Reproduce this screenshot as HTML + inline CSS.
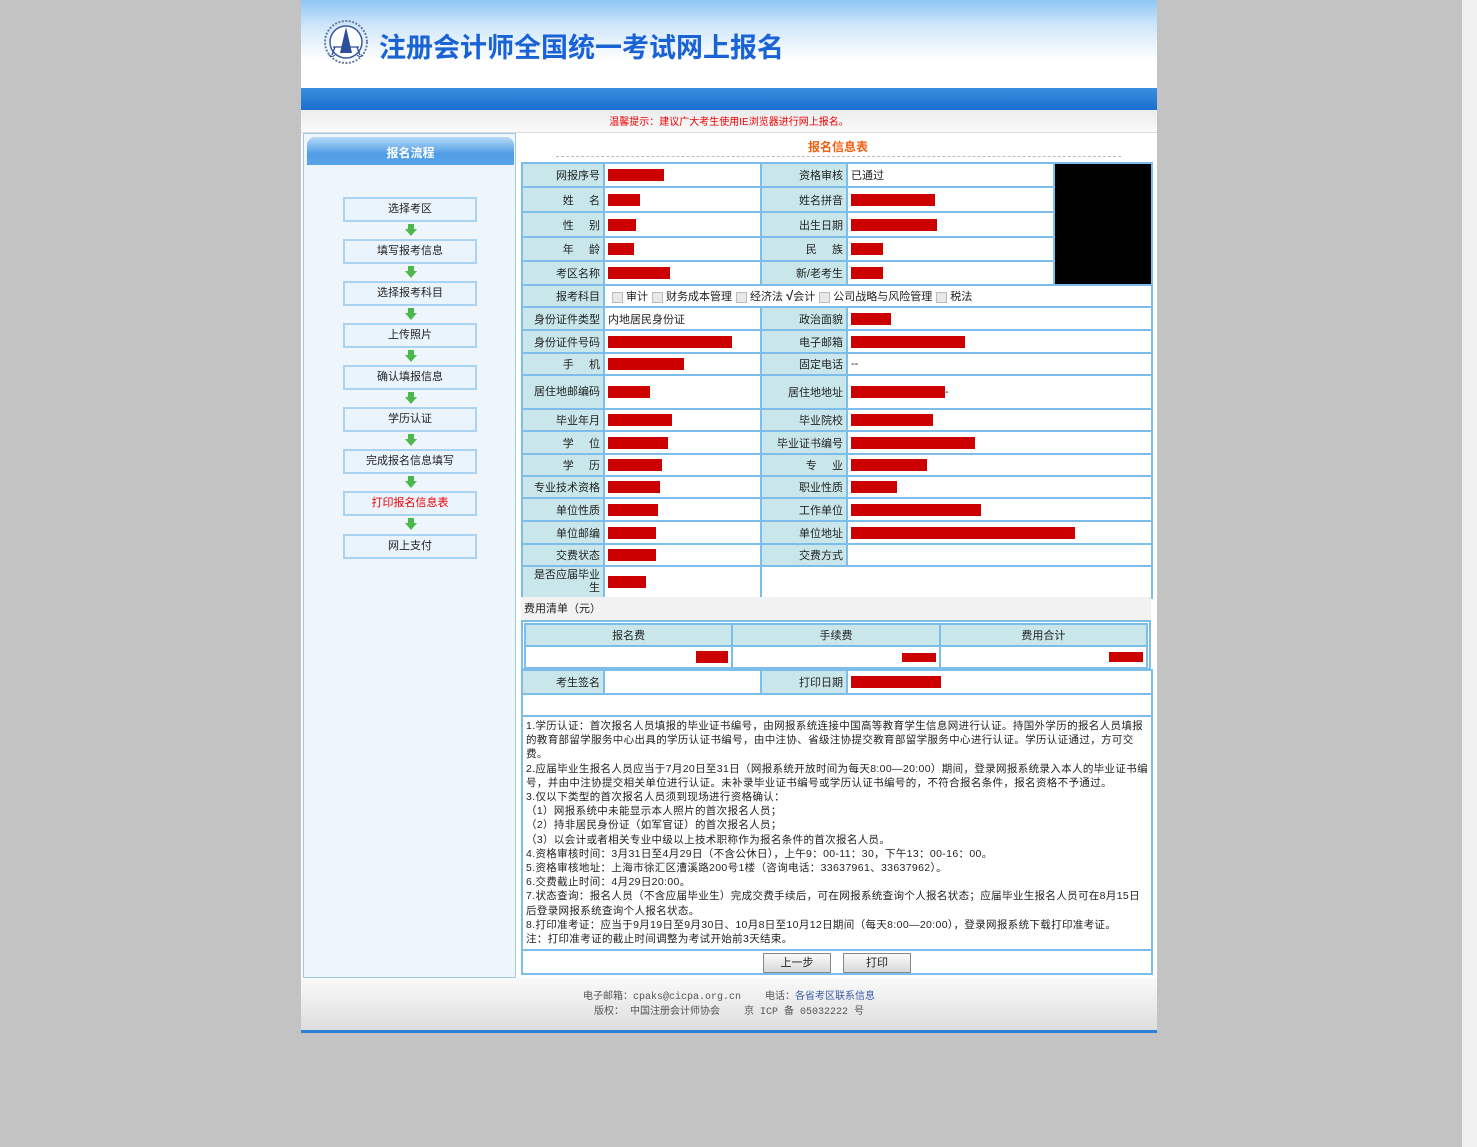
<!DOCTYPE html>
<html><head><meta charset="utf-8">
<style>
*{margin:0;padding:0;box-sizing:border-box}
body{width:1477px;height:1147px;background:#c3c3c3;font-family:"Liberation Sans","Noto Sans CJK SC",sans-serif;font-size:11px;color:#222;position:relative;overflow:hidden}
.wrap{position:absolute;left:301px;top:0;width:856px;height:1033px;background:#fff}
.head{position:absolute;left:0;top:0;width:856px;height:88px;background:linear-gradient(#8ec6f5 0,#cfe6fa 25px,#fff 60px,#fff)}
.title{position:absolute;left:78px;top:26px;font-size:27px;font-weight:bold;color:#1a63d6;font-family:"Noto Sans CJK SC",sans-serif}
.band{position:absolute;left:0;top:88px;width:856px;height:22px;background:linear-gradient(#3a8fe0,#1a6fcf)}
.notice{position:absolute;left:0;top:110px;width:856px;height:23px;background:linear-gradient(#ececec,#fafafa);border-bottom:1px solid #ddd;text-align:center;color:#e00;font-size:10px;line-height:26px;padding-left:0}
.side{position:absolute;left:2px;top:133px;width:213px;height:845px;background:#eef6fc;border:1px solid #9cc8ec}
.stab{position:absolute;left:3px;top:3px;width:207px;height:28px;border-radius:8px 8px 0 0;background:linear-gradient(#b8daf7,#4f9de6 60%,#5aa4ea);color:#fff;font-weight:bold;font-size:12px;text-align:center;line-height:32px}
.btn{position:absolute;left:39px;width:134px;height:25px;border:2px solid #a9d2f3;background:#eaf4fd;text-align:center;line-height:21px;font-size:11px;color:#222}
.arr{position:absolute;left:101px;width:12px;height:12px}
.main{position:absolute;left:220px;top:133px;width:634px;height:845px}
.tt{position:absolute;left:0;width:634px;top:5px;text-align:center;color:#f06010;font-weight:bold;font-size:12px}
.dash{position:absolute;left:35px;width:565px;top:23px;border-top:1px dashed #bbb}
table{border-collapse:collapse;table-layout:fixed}
td{border:2px solid #7cbde9;font-size:11px;padding:0 3px;overflow:hidden;white-space:nowrap}
td.l{background:#c9e7ea;text-align:right}
.r{display:inline-block;background:#c00;height:12px;vertical-align:middle}
.cb{display:inline-block;width:11px;height:11px;border:1px solid #bbb;background:#e8e8e8;vertical-align:middle;margin:0 3px 0 4px}
.notes{font-size:10.5px;line-height:14.2px;letter-spacing:0.35px;white-space:normal;padding:2px 3px;vertical-align:top}
.foot{position:absolute;left:0;top:978px;width:856px;height:52px;background:linear-gradient(#fafafa,#ddd);text-align:center;font-size:10px;color:#555;line-height:15px;padding-top:12px;font-family:"Liberation Mono","Noto Sans CJK SC",monospace}
.fline{position:absolute;left:0;top:1030px;width:856px;height:3px;background:#2a7fd6}
.pb{display:inline-block;width:68px;height:20px;border:1px solid #888;background:linear-gradient(#fafafa,#d8d8d8);font-size:11px;line-height:18px;margin:0 6px}
.sb{position:absolute;left:1462px;top:0;width:15px;height:1147px;background:#f0f0f0}
</style></head><body>
<div class="sb"></div>
<div class="wrap">
<div class="head">
<svg style="position:absolute;left:20px;top:19px" width="50" height="48" viewBox="0 0 50 48"><circle cx="25" cy="23" r="21" fill="none" stroke="#6a7aa0" stroke-width="2" stroke-dasharray="2 1.5"/><circle cx="25" cy="23" r="16" fill="#fff" stroke="#3a5aa0" stroke-width="1.5"/><path d="M25 8 L31 34 L19 34 Z" fill="#2d4f9a"/><path d="M12 28 L38 28 M14 28 L11 36 M36 28 L39 36" stroke="#2d4f9a" stroke-width="1.3" fill="none"/><path d="M8 36 q3 3 6 0 M36 36 q3 3 6 0" stroke="#2d4f9a" fill="none"/></svg>
<div class="title">注册会计师全国统一考试网上报名</div>
</div>
<div class="band"></div>
<div class="notice">温馨提示：建议广大考生使用IE浏览器进行网上报名。</div>
<div class="side">
<div class="stab">报名流程</div>
<div class="btn" style="top:63px">选择考区</div>
<div class="btn" style="top:105px">填写报考信息</div>
<div class="btn" style="top:147px">选择报考科目</div>
<div class="btn" style="top:189px">上传照片</div>
<div class="btn" style="top:231px">确认填报信息</div>
<div class="btn" style="top:273px">学历认证</div>
<div class="btn" style="top:315px">完成报名信息填写</div>
<div class="btn" style="top:357px;color:#e00">打印报名信息表</div>
<div class="btn" style="top:400px">网上支付</div>
<svg class="arr" style="top:90px" viewBox="0 0 12 12"><path d="M3 0h6v5h3L6 12 0 5h3z" fill="#4cb84c"/></svg>
<svg class="arr" style="top:132px" viewBox="0 0 12 12"><path d="M3 0h6v5h3L6 12 0 5h3z" fill="#4cb84c"/></svg>
<svg class="arr" style="top:174px" viewBox="0 0 12 12"><path d="M3 0h6v5h3L6 12 0 5h3z" fill="#4cb84c"/></svg>
<svg class="arr" style="top:216px" viewBox="0 0 12 12"><path d="M3 0h6v5h3L6 12 0 5h3z" fill="#4cb84c"/></svg>
<svg class="arr" style="top:258px" viewBox="0 0 12 12"><path d="M3 0h6v5h3L6 12 0 5h3z" fill="#4cb84c"/></svg>
<svg class="arr" style="top:300px" viewBox="0 0 12 12"><path d="M3 0h6v5h3L6 12 0 5h3z" fill="#4cb84c"/></svg>
<svg class="arr" style="top:342px" viewBox="0 0 12 12"><path d="M3 0h6v5h3L6 12 0 5h3z" fill="#4cb84c"/></svg>
<svg class="arr" style="top:384px" viewBox="0 0 12 12"><path d="M3 0h6v5h3L6 12 0 5h3z" fill="#4cb84c"/></svg>
</div>
<div class="main">
<div class="tt">报名信息表</div>
<div class="dash"></div>
<table style="position:absolute;left:0;top:29px;width:630px">
<colgroup><col style="width:82px"><col style="width:157px"><col style="width:86px"><col style="width:207px"><col style="width:98px"></colgroup>
<tr style="height:24px"><td class="l">网报序号</td><td><span class="r" style="width:56px"></span></td><td class="l">资格审核</td><td>已通过</td><td rowspan="5" style="background:#000;border-color:#7cbde9"></td></tr>
<tr style="height:25px"><td class="l">姓&nbsp;&nbsp;&nbsp;&nbsp;&nbsp;名</td><td><span class="r" style="width:32px"></span></td><td class="l">姓名拼音</td><td><span class="r" style="width:84px"></span></td></tr>
<tr style="height:25px"><td class="l">性&nbsp;&nbsp;&nbsp;&nbsp;&nbsp;别</td><td><span class="r" style="width:28px"></span></td><td class="l">出生日期</td><td><span class="r" style="width:86px"></span></td></tr>
<tr style="height:24px"><td class="l">年&nbsp;&nbsp;&nbsp;&nbsp;&nbsp;龄</td><td><span class="r" style="width:26px"></span></td><td class="l">民&nbsp;&nbsp;&nbsp;&nbsp;&nbsp;族</td><td><span class="r" style="width:32px"></span></td></tr>
<tr style="height:24px"><td class="l">考区名称</td><td><span class="r" style="width:62px"></span></td><td class="l">新/老考生</td><td><span class="r" style="width:32px"></span></td></tr>
<tr style="height:22px"><td class="l">报考科目</td><td colspan="4"><span class="cb"></span>审计<span class="cb"></span>财务成本管理<span class="cb"></span>经济法 <b style="font-size:13px">√</b>会计<span class="cb"></span>公司战略与风险管理<span class="cb"></span>税法</td></tr>
<tr style="height:23px"><td class="l">身份证件类型</td><td>内地居民身份证</td><td class="l">政治面貌</td><td colspan="2"><span class="r" style="width:40px"></span></td></tr>
<tr style="height:23px"><td class="l">身份证件号码</td><td><span class="r" style="width:124px"></span></td><td class="l">电子邮箱</td><td colspan="2"><span class="r" style="width:114px"></span></td></tr>
<tr style="height:22px"><td class="l">手&nbsp;&nbsp;&nbsp;&nbsp;&nbsp;机</td><td><span class="r" style="width:76px"></span></td><td class="l">固定电话</td><td colspan="2">--</td></tr>
<tr style="height:34px"><td class="l" style="white-space:normal;line-height:13px">居住地邮编码</td><td><span class="r" style="width:42px"></span></td><td class="l">居住地地址</td><td colspan="2"><span class="r" style="width:94px"></span>-</td></tr>
<tr style="height:22px"><td class="l">毕业年月</td><td><span class="r" style="width:64px"></span></td><td class="l">毕业院校</td><td colspan="2"><span class="r" style="width:82px"></span></td></tr>
<tr style="height:23px"><td class="l">学&nbsp;&nbsp;&nbsp;&nbsp;&nbsp;位</td><td><span class="r" style="width:60px"></span></td><td class="l">毕业证书编号</td><td colspan="2"><span class="r" style="width:124px"></span></td></tr>
<tr style="height:22px"><td class="l">学&nbsp;&nbsp;&nbsp;&nbsp;&nbsp;历</td><td><span class="r" style="width:54px"></span></td><td class="l">专&nbsp;&nbsp;&nbsp;&nbsp;&nbsp;业</td><td colspan="2"><span class="r" style="width:76px"></span></td></tr>
<tr style="height:22px"><td class="l">专业技术资格</td><td><span class="r" style="width:52px"></span></td><td class="l">职业性质</td><td colspan="2"><span class="r" style="width:46px"></span></td></tr>
<tr style="height:23px"><td class="l">单位性质</td><td><span class="r" style="width:50px"></span></td><td class="l">工作单位</td><td colspan="2"><span class="r" style="width:130px"></span></td></tr>
<tr style="height:23px"><td class="l">单位邮编</td><td><span class="r" style="width:48px"></span></td><td class="l">单位地址</td><td colspan="2"><span class="r" style="width:224px"></span></td></tr>
<tr style="height:22px"><td class="l">交费状态</td><td><span class="r" style="width:48px"></span></td><td class="l">交费方式</td><td colspan="2"></td></tr>
<tr style="height:32px"><td class="l" style="white-space:normal;line-height:13px">是否应届毕业生</td><td><span class="r" style="width:38px"></span></td><td colspan="3"></td></tr>
</table>
<div style="position:absolute;left:0;top:464px;width:630px;height:23px;background:#f2f2f2;line-height:24px;padding-left:3px;font-size:11px">费用清单（元）</div>
<div style="position:absolute;left:0;top:487px;width:630px;height:50px;border:2px solid #7cbde9;padding:1px">
<table style="width:624px">
<tr style="height:22px"><td class="l" style="text-align:center">报名费</td><td class="l" style="text-align:center">手续费</td><td class="l" style="text-align:center">费用合计</td></tr>
<tr style="height:22px"><td style="text-align:right"><span class="r" style="width:32px"></span></td><td style="text-align:right"><span class="r" style="width:34px;height:9px"></span></td><td style="text-align:right"><span class="r" style="width:34px;height:10px"></span></td></tr>
</table></div>
<table style="position:absolute;left:0;top:536px;width:630px">
<colgroup><col style="width:82px"><col style="width:157px"><col style="width:86px"><col style="width:305px"></colgroup>
<tr style="height:24px"><td class="l">考生签名</td><td></td><td class="l">打印日期</td><td><span class="r" style="width:90px"></span></td></tr>
<tr style="height:22px"><td colspan="4"></td></tr>
<tr style="height:234px"><td colspan="4" class="notes">1.学历认证：首次报名人员填报的毕业证书编号，由网报系统连接中国高等教育学生信息网进行认证。持国外学历的报名人员填报的教育部留学服务中心出具的学历认证书编号，由中注协、省级注协提交教育部留学服务中心进行认证。学历认证通过，方可交费。<br>2.应届毕业生报名人员应当于7月20日至31日（网报系统开放时间为每天8:00—20:00）期间，登录网报系统录入本人的毕业证书编号，并由中注协提交相关单位进行认证。未补录毕业证书编号或学历认证书编号的，不符合报名条件，报名资格不予通过。<br>3.仅以下类型的首次报名人员须到现场进行资格确认：<br>（1）网报系统中未能显示本人照片的首次报名人员；<br>（2）持非居民身份证（如军官证）的首次报名人员；<br>（3）以会计或者相关专业中级以上技术职称作为报名条件的首次报名人员。<br>4.资格审核时间：3月31日至4月29日（不含公休日），上午9：00-11：30，下午13：00-16：00。<br>5.资格审核地址：上海市徐汇区漕溪路200号1楼（咨询电话：33637961、33637962）。<br>6.交费截止时间：4月29日20:00。<br>7.状态查询：报名人员（不含应届毕业生）完成交费手续后，可在网报系统查询个人报名状态；应届毕业生报名人员可在8月15日后登录网报系统查询个人报名状态。<br>8.打印准考证：应当于9月19日至9月30日、10月8日至10月12日期间（每天8:00—20:00），登录网报系统下载打印准考证。<br>注：打印准考证的截止时间调整为考试开始前3天结束。</td></tr>
<tr style="height:24px"><td colspan="4" style="text-align:center;padding-top:1px"><span class="pb">上一步</span><span class="pb">打印</span></td></tr>
</table>
</div>
<div class="foot">电子邮箱：cpaks@cicpa.org.cn &nbsp;&nbsp;&nbsp;电话：<span style="color:#3a5aa8">各省考区联系信息</span><br>版权： 中国注册会计师协会 &nbsp;&nbsp;&nbsp;京 ICP 备 05032222 号</div>
<div class="fline"></div>
</div>
</body></html>
